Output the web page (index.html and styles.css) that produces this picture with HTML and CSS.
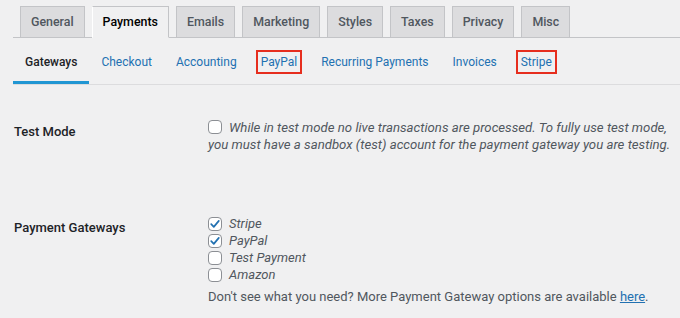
FILE: index.html
```html
<!DOCTYPE html>
<html>
<head>
<meta charset="utf-8">
<link rel="stylesheet" href="styles.css">
</head>
<body>
<div class="tabs">
  <a class="tab">General</a>
  <a class="tab active">Payments</a>
  <a class="tab">Emails</a>
  <a class="tab">Marketing</a>
  <a class="tab">Styles</a>
  <a class="tab">Taxes</a>
  <a class="tab">Privacy</a>
  <a class="tab">Misc</a>
</div>
<div class="subnav">
  <a class="sub current">Gateways</a>
  <a class="sub">Checkout</a>
  <a class="sub">Accounting</a>
  <a class="sub"><span class="hl">PayPal</span></a>
  <a class="sub">Recurring Payments</a>
  <a class="sub">Invoices</a>
  <a class="sub"><span class="hl">Stripe</span></a>
</div>
<div class="form">
  <div class="row">
    <div class="label">Test Mode</div>
    <div class="field">
      <p class="desc"><span class="cb"></span>While in test mode no live transactions are processed. To fully use test mode,<br>you must have a sandbox (test) account for the payment gateway you are testing.</p>
    </div>
  </div>
  <div class="row">
    <div class="label">Payment Gateways</div>
    <div class="field">
      <div class="opt"><span class="cb on"><svg viewBox="0 0 14 14" width="14" height="14"><path d="M3.2 7.2 L5.8 9.9 L10.8 3.9" fill="none" stroke="#2271b1" stroke-width="1.7" stroke-linecap="round" stroke-linejoin="round"/></svg></span><span class="optlabel">Stripe</span></div>
      <div class="opt"><span class="cb on"><svg viewBox="0 0 14 14" width="14" height="14"><path d="M3.2 7.2 L5.8 9.9 L10.8 3.9" fill="none" stroke="#2271b1" stroke-width="1.7" stroke-linecap="round" stroke-linejoin="round"/></svg></span><span class="optlabel">PayPal</span></div>
      <div class="opt"><span class="cb"></span><span class="optlabel">Test Payment</span></div>
      <div class="opt"><span class="cb"></span><span class="optlabel">Amazon</span></div>
      <p class="more">Don't see what you need? More Payment Gateway options are available <a class="link">here</a>.</p>
    </div>
  </div>
</div>
</body>
</html>
```

FILE: styles.css
```css
html, body {
  margin: 0;
  padding: 0;
  background: #f0f0f1;
  font-family: Roboto, "Liberation Sans", sans-serif;
  color: #1d2327;
}

.tabs {
  display: flex;
  margin-left: 13px;
  padding-top: 6px;
  border-bottom: 1px solid #c3c4c7;
}

.tab {
  display: block;
  margin-left: 7px;
  margin-bottom: -1px;
  padding: 0 10px;
  line-height: 30px;
  font-size: 12.4px;
  font-weight: 500;
  color: #50575e;
  background: #dcdcde;
  border: 1px solid #c3c4c7;
}

.tab.active {
  background: #f0f0f1;
  color: #000;
  border-color: #c3c4c7 #c3c4c7 #f0f0f1;
  border-left-color: #fff;
}

.subnav {
  display: flex;
  margin-left: 13px;
  border-bottom: 1px solid #dcdcde;
}

.sub {
  display: block;
  padding: 16px 12px 11px;
  line-height: 16px;
  font-size: 12px;
  color: #2271b1;
  border-bottom: 3px solid transparent;
}

.sub.current {
  color: #1d2327;
  font-weight: 500;
  border-bottom-color: #2196d3;
}

.hl {
  outline: 2px solid #e62e1e;
  outline-offset: 3px;
}

.form {
  padding-top: 3px;
  margin-left: 14px;
}

.row {
  display: grid;
  grid-template-columns: 194px 1fr;
  padding: 31px 0;
}

.row:last-child {
  padding-bottom: 10px;
}

.label {
  padding-top: 4px;
  line-height: 17px;
  font-size: 13px;
  font-weight: 500;
}

.desc {
  margin: 0;
  font-size: 13.2px;
  line-height: 17px;
  font-style: italic;
  color: #50575e;
  white-space: nowrap;
}

.cb {
  display: inline-block;
  box-sizing: border-box;
  width: 14px;
  height: 14px;
  border: 1px solid #8c8f94;
  border-radius: 4px;
  background: #fff;
  vertical-align: -2px;
  margin-right: 7px;
}

.cb svg {
  display: block;
  margin: -1px;
}

.opt {
  display: flex;
  align-items: center;
  height: 17px;
}

.optlabel {
  font-size: 13px;
  font-style: italic;
  color: #50575e;
}

.more {
  margin: 5px 0 0;
  font-size: 13px;
  line-height: 17px;
  color: #50575e;
}

.link {
  color: #2271b1;
  text-decoration: underline;
}
```
